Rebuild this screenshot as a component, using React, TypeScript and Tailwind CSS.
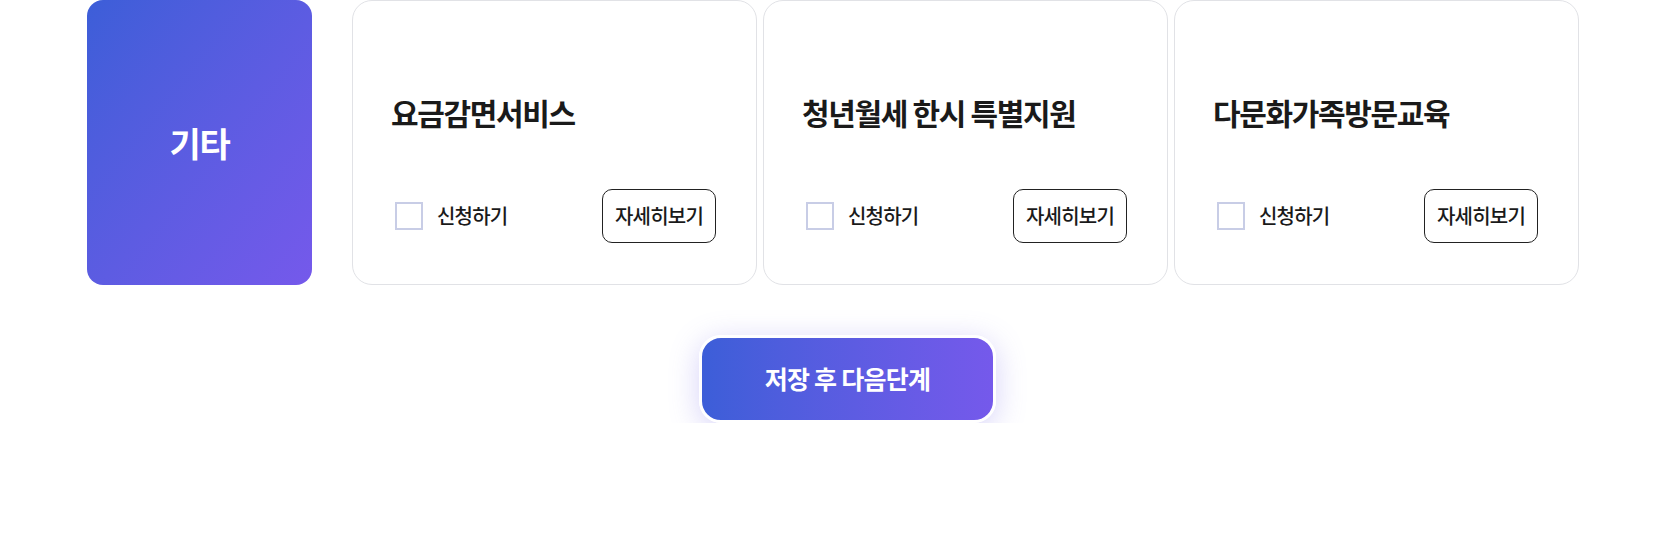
import { useState } from "react";

interface Service {
  id: string;
  title: string;
}

const services: Service[] = [
  { id: "fee", title: "요금감면서비스" },
  { id: "rent", title: "청년월세 한시 특별지원" },
  { id: "family", title: "다문화가족방문교육" },
];

function ServiceCard({
  service,
  checked,
  onToggle,
}: {
  service: Service;
  checked: boolean;
  onToggle: () => void;
}) {
  return (
    <div className="flex h-[285px] w-[405px] shrink-0 flex-col rounded-[20px] border border-[#e1e2e6] bg-white pb-[41px] pl-[38px] pr-[40px] pt-[91px]">
      <h3 className="text-[30px] font-bold leading-[40px] tracking-[-0.045em] text-[#1a1a1a]">
        {service.title}
      </h3>
      <div className="mt-auto flex items-center justify-between">
        <label className="flex cursor-pointer items-center gap-[14px] pl-[4px]">
          <input
            type="checkbox"
            checked={checked}
            onChange={onToggle}
            className="h-[28px] w-[28px] cursor-pointer appearance-none border-2 border-[#c8cde6] bg-white checked:border-[#3b5bdb] checked:bg-[#3b5bdb]"
          />
          <span className="text-[20px] font-medium tracking-[-0.04em] text-[#1a1a1a]">
            신청하기
          </span>
        </label>
        <button
          type="button"
          className="h-[54px] rounded-[10px] border border-[#222] bg-white px-[12px] text-[20px] font-medium tracking-[-0.04em] text-[#1a1a1a]"
        >
          자세히보기
        </button>
      </div>
    </div>
  );
}

export default function App() {
  const [selected, setSelected] = useState<Record<string, boolean>>({});

  return (
    <div
      className="min-h-[551px] w-full bg-white"
      style={{ fontFamily: '"Noto Sans CJK KR", "Noto Sans", sans-serif' }}
    >
      {/* Category row */}
      <div className="flex items-start pl-[87px]">
        <div className="flex h-[285px] w-[225px] shrink-0 items-center justify-center rounded-2xl bg-linear-to-br from-[#3c5ed8] to-[#7559eb]">
          <span className="text-[34px] font-bold tracking-[-0.04em] text-white">
            기타
          </span>
        </div>
        <div className="ml-[40px] flex gap-[6px]">
          {services.map((s) => (
            <ServiceCard
              key={s.id}
              service={s}
              checked={!!selected[s.id]}
              onToggle={() =>
                setSelected((prev) => ({ ...prev, [s.id]: !prev[s.id] }))
              }
            />
          ))}
        </div>
      </div>

      {/* Save button */}
      <div className="flex justify-center overflow-hidden pl-[42px] pt-[50px]">
        <button
          type="button"
          className="h-[88px] w-[297px] rounded-[22px] border-[3px] border-white bg-linear-to-r from-[#3c5ed8] to-[#7559eb] text-[25px] font-bold tracking-[-0.03em] text-white shadow-[0_6px_30px_rgba(108,92,231,0.28)]"
        >
          저장 후 다음단계
        </button>
      </div>
    </div>
  );
}
